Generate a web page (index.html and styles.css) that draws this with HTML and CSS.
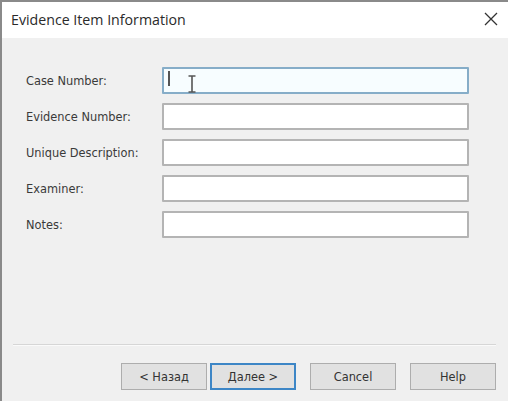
FILE: index.html
```html
<!DOCTYPE html>
<html>
<head>
<meta charset="utf-8">
<link rel="stylesheet" href="styles.css">
</head>
<body>
<div class="window">
  <div class="titlebar">
    <span class="title">Evidence Item Information</span>
    <svg class="close" width="14" height="14" viewBox="0 0 14 14"><path d="M1 1L13 13M13 1L1 13" stroke="#333" stroke-width="1.3" fill="none"/></svg>
  </div>
  <div class="form">
    <label class="label">Case Number:</label>
    <div class="field focused"><span class="caret"></span>
      <svg class="ibeam" width="8" height="18" viewBox="0 0 8 18"><path d="M0.5 1H7.5M4 1V17M0.5 17H7.5" stroke="#555" stroke-width="1.6" fill="none"/></svg>
    </div>
    <label class="label">Evidence Number:</label>
    <div class="field"></div>
    <label class="label">Unique Description:</label>
    <div class="field"></div>
    <label class="label">Examiner:</label>
    <div class="field"></div>
    <label class="label">Notes:</label>
    <div class="field"></div>
  </div>
  <div class="spacer"></div>
  <div class="separator"></div>
  <div class="buttons">
    <div class="pair">
      <button class="btn">&lt; Назад</button>
      <button class="btn default">Далее &gt;</button>
    </div>
    <button class="btn">Cancel</button>
    <button class="btn">Help</button>
  </div>
</div>
</body>
</html>
```
FILE: styles.css
```css
html, body {
  margin: 0;
  padding: 0;
  height: 100%;
}
body {
  background: #f0f0f0;
  font-family: "DejaVu Sans", sans-serif;
  color: #3a3a3a;
}
.window {
  box-sizing: border-box;
  height: 401px;
  width: 508px;
  border-top: 2px solid #8a8a8a;
  border-left: 2px solid #8a8a8a;
  display: flex;
  flex-direction: column;
}
.titlebar {
  height: 36px;
  background: #ffffff;
  display: flex;
  align-items: center;
  justify-content: space-between;
  padding: 0 10px 0 9px;
  flex: none;
}
.title {
  font-family: "Open Sans", sans-serif;
  font-size: 14.2px;
  color: #2a2a2a;
  position: relative;
  top: -1px;
}
.close {
  position: relative;
  top: -1px;
}
.form {
  display: grid;
  grid-template-columns: 136px 307px;
  grid-auto-rows: 27px;
  row-gap: 9px;
  padding: 29px 0 0 24px;
  align-items: center;
}
.label {
  font-size: 11.4px;
  color: #3a3a3a;
}
.field {
  box-sizing: border-box;
  height: 27px;
  background: #ffffff;
  border: 2px solid #b4b4b4;
  border-radius: 1px;
  position: relative;
}
.field.focused {
  border-color: #86adc8;
  background: #f7fdff;
}
.caret {
  position: absolute;
  left: 4px;
  top: 2px;
  width: 2px;
  height: 15px;
  background: #555;
}
.ibeam {
  position: absolute;
  left: 24px;
  top: 6px;
}
.spacer {
  flex: 1;
}
.separator {
  margin-left: 11px;
  width: 483px;
  height: 1px;
  background: #d6d6d6;
  border-bottom: 1px solid #fafafa;
}
.buttons {
  display: flex;
  justify-content: flex-end;
  gap: 14px;
  padding: 17px 12px 11px 0;
}
.pair {
  display: flex;
  gap: 3px;
}
.btn {
  box-sizing: border-box;
  width: 86px;
  height: 27px;
  background: #e1e1e1;
  border: 1px solid #adadad;
  font-family: "DejaVu Sans", sans-serif;
  font-size: 11.4px;
  color: #333;
  padding: 0;
  margin: 0;
}
.btn.default {
  border: 2px solid #3d86c6;
}
```
